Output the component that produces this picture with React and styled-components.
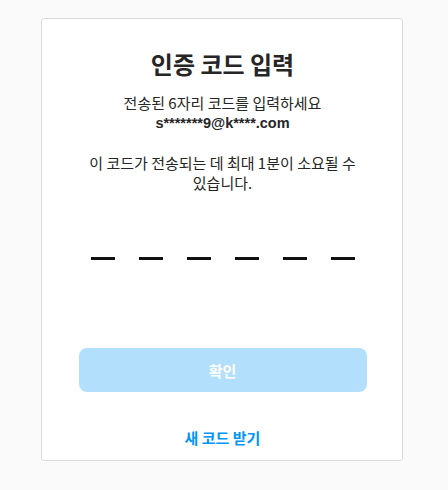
import React, { useState } from "react";
import styled, { createGlobalStyle } from "styled-components";

const GlobalStyle = createGlobalStyle`
  body {
    margin: 0;
    background: #fafafa;
    font-family: "Noto Sans CJK KR", "Noto Sans", sans-serif;
    color: #262626;
  }
`;

const Page = styled.div`
  padding: 18px 0 0 41px;
`;

const Card = styled.div`
  box-sizing: border-box;
  width: 362px;
  height: 443px;
  background: #fff;
  border: 1px solid #dbdbdb;
  border-radius: 3px;
  padding: 27px 35px 0 36px;
  display: flex;
  flex-direction: column;
  align-items: center;
  text-align: center;
  word-break: keep-all;
`;

const Title = styled.h1`
  margin: 0;
  font-size: 24px;
  font-weight: 700;
  line-height: 36px;
`;

const Sub = styled.p`
  margin: 11px 0 0;
  font-size: 15px;
  line-height: 20px;
`;

const Email = styled.span`
  display: block;
  font-family: "Liberation Sans", "Noto Sans CJK KR", sans-serif;
  font-size: 14.5px;
  font-weight: 700;
`;

const Note = styled.p`
  margin: 20px 0 0;
  font-size: 15px;
  line-height: 20px;
`;

const Digits = styled.div`
  display: flex;
  gap: 24px;
  margin-top: 40px;
`;

const Digit = styled.input`
  width: 24px;
  height: 24px;
  padding: 0;
  border: none;
  border-bottom: 3px solid #111;
  text-align: center;
  font-size: 18px;
  font-family: inherit;
  outline: none;
  background: transparent;
`;

const Button = styled.button`
  margin-top: 88px;
  width: 288px;
  height: 44px;
  border: none;
  border-radius: 8px;
  background: #b2dffc;
  color: #fff;
  font-family: inherit;
  font-size: 15px;
  font-weight: 700;
`;

const Resend = styled.a`
  margin-top: 35px;
  color: #0095f6;
  font-size: 15px;
  font-weight: 700;
  text-decoration: none;
  cursor: pointer;
`;

export default function App() {
  const [code, setCode] = useState(["", "", "", "", "", ""]);
  return (
    <>
      <GlobalStyle />
      <Page>
        <Card>
          <Title>인증 코드 입력</Title>
          <Sub>
            전송된 6자리 코드를 입력하세요
            <Email>s*******9@k****.com</Email>
          </Sub>
          <Note>이 코드가 전송되는 데 최대 1분이 소요될 수 있습니다.</Note>
          <Digits>
            {code.map((v, i) => (
              <Digit
                key={i}
                maxLength={1}
                value={v}
                onChange={(e) => {
                  const next = [...code];
                  next[i] = e.target.value;
                  setCode(next);
                }}
              />
            ))}
          </Digits>
          <Button disabled>확인</Button>
          <Resend>새 코드 받기</Resend>
        </Card>
      </Page>
    </>
  );
}
